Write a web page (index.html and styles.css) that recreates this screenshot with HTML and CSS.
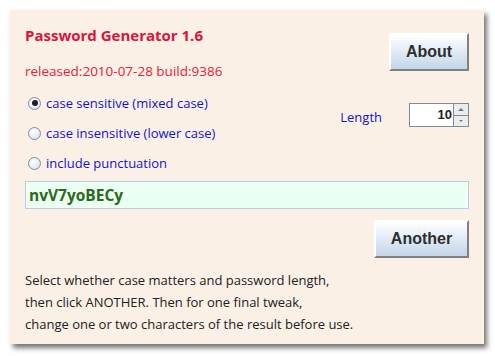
FILE: index.html
```html
<!DOCTYPE html>
<html>
<head>
<meta charset="utf-8">
<link rel="stylesheet" href="styles.css">
</head>
<body>
<div class="panel">
  <div class="top">
    <div class="left">
      <div class="title">Password Generator 1.6</div>
      <div class="released">released:2010-07-28 build:9386</div>
      <div class="radios">
        <div class="radio"><span class="dot checked"></span><span>case sensitive (mixed case)</span></div>
        <div class="radio"><span class="dot"></span><span>case insensitive (lower case)</span></div>
        <div class="radio"><span class="dot"></span><span>include punctuation</span></div>
      </div>
    </div>
    <div class="right">
      <div class="btn about">About</div>
      <div class="lenrow">
        <span class="lenlabel">Length</span>
        <div class="spinner">
          <div class="spin-val">10</div>
          <div class="spin-arrows">
            <div class="arr up"><span class="tri-up"></span></div>
            <div class="arr down"><span class="tri-down"></span></div>
          </div>
        </div>
      </div>
    </div>
  </div>
  <div class="pw">nvV7yoBECy</div>
  <div class="another-row"><div class="btn another">Another</div></div>
  <div class="help">
    <div>Select whether case matters and password length,</div>
    <div>then click ANOTHER. Then for one final tweak,</div>
    <div>change one or two characters of the result before use.</div>
  </div>
</div>
</body>
</html>
```

FILE: styles.css
```css
html, body {
  margin: 0;
  padding: 0;
  background: #ffffff;
}
body {
  width: 495px;
  height: 356px;
  overflow: hidden;
  font-family: "Open Sans", "Noto Sans", sans-serif;
}
.panel {
  margin: 10px 0 0 10px;
  width: 474px;
  height: 334px;
  box-sizing: border-box;
  background: #faf0e6;
  box-shadow: 3px 4px 5px rgba(0,0,0,0.55);
  padding: 0 15px 0 15px;
}
.top {
  display: flex;
  justify-content: space-between;
}
.left {
  display: flex;
  flex-direction: column;
}
.title {
  color: #dc143c;
  font-weight: bold;
  font-size: 15px;
  line-height: 20px;
  margin-top: 15px;
}
.released {
  color: #e8203c;
  font-size: 13.5px;
  line-height: 18px;
  margin-top: 17px;
}
.radios {
  display: flex;
  flex-direction: column;
  margin-top: 8px;
}
.radio {
  display: flex;
  align-items: center;
  height: 30px;
  color: #1414c8;
  font-size: 13px;
  padding-left: 3px;
}
.dot {
  width: 11px;
  height: 11px;
  border-radius: 50%;
  border: 1px solid #7d8fa3;
  background: radial-gradient(circle at 40% 35%, #ffffff 0%, #e4eaf0 60%, #c9d2dc 100%);
  margin-right: 5px;
  position: relative;
  flex: none;
}
.dot.checked::after {
  content: "";
  position: absolute;
  left: 2.5px;
  top: 2.5px;
  width: 6px;
  height: 6px;
  border-radius: 50%;
  background: #1e1e1e;
}
.right {
  display: flex;
  flex-direction: column;
  align-items: flex-end;
}
.btn {
  box-sizing: border-box;
  font-family: "Liberation Sans", Arial, sans-serif;
  font-weight: bold;
  font-size: 16px;
  color: #2e2e2e;
  display: flex;
  align-items: center;
  justify-content: center;
  background: linear-gradient(#ffffff 0%, #e6eef7 40%, #c3d5e8 100%);
  border-top: 2px solid #ffffff;
  border-left: 2px solid #ffffff;
  border-right: 2px solid #808080;
  border-bottom: 2px solid #808080;
}
.about {
  width: 80px;
  height: 38px;
  margin-top: 23px;
}
.lenrow {
  display: flex;
  align-items: center;
  margin-top: 32px;
}
.lenlabel {
  color: #1414c8;
  font-size: 13px;
  margin-right: 27px;
  position: relative;
  top: 2px;
}
.spinner {
  display: flex;
  height: 24px;
  width: 60px;
  box-sizing: border-box;
}
.spin-val {
  flex: 1;
  box-sizing: border-box;
  background: #ffffff;
  border: 1px solid #7d8a98;
  border-right: none;
  font-family: "Liberation Sans", Arial, sans-serif;
  font-weight: bold;
  font-size: 13px;
  color: #222;
  text-align: right;
  line-height: 22px;
  padding-right: 1px;
}
.spin-arrows {
  width: 16px;
  display: flex;
  flex-direction: column;
}
.arr {
  flex: 1;
  box-sizing: border-box;
  border: 1px solid #7d8a98;
  background: #ececec;
  display: flex;
  align-items: center;
  justify-content: center;
}
.arr.down { border-top: none; }
.tri-up {
  width: 0; height: 0;
  border-left: 3px solid transparent;
  border-right: 3px solid transparent;
  border-bottom: 3px solid #6b7a8a;
}
.tri-down {
  width: 0; height: 0;
  border-left: 2px solid transparent;
  border-right: 2px solid transparent;
  border-top: 2px solid #6b7a8a;
}
.pw {
  margin-top: 3px;
  height: 28px;
  box-sizing: border-box;
  border: 1px solid #b8cde3;
  background: #ebfff3;
  color: #2a6a1a;
  font-weight: bold;
  font-size: 15.5px;
  line-height: 26px;
  padding-left: 3px;
}
.another-row {
  display: flex;
  justify-content: flex-end;
  margin-top: 11px;
}
.another {
  width: 95px;
  height: 38px;
}
.help {
  margin-top: 11px;
  color: #222222;
  font-size: 13px;
  line-height: 22px;
}
```
